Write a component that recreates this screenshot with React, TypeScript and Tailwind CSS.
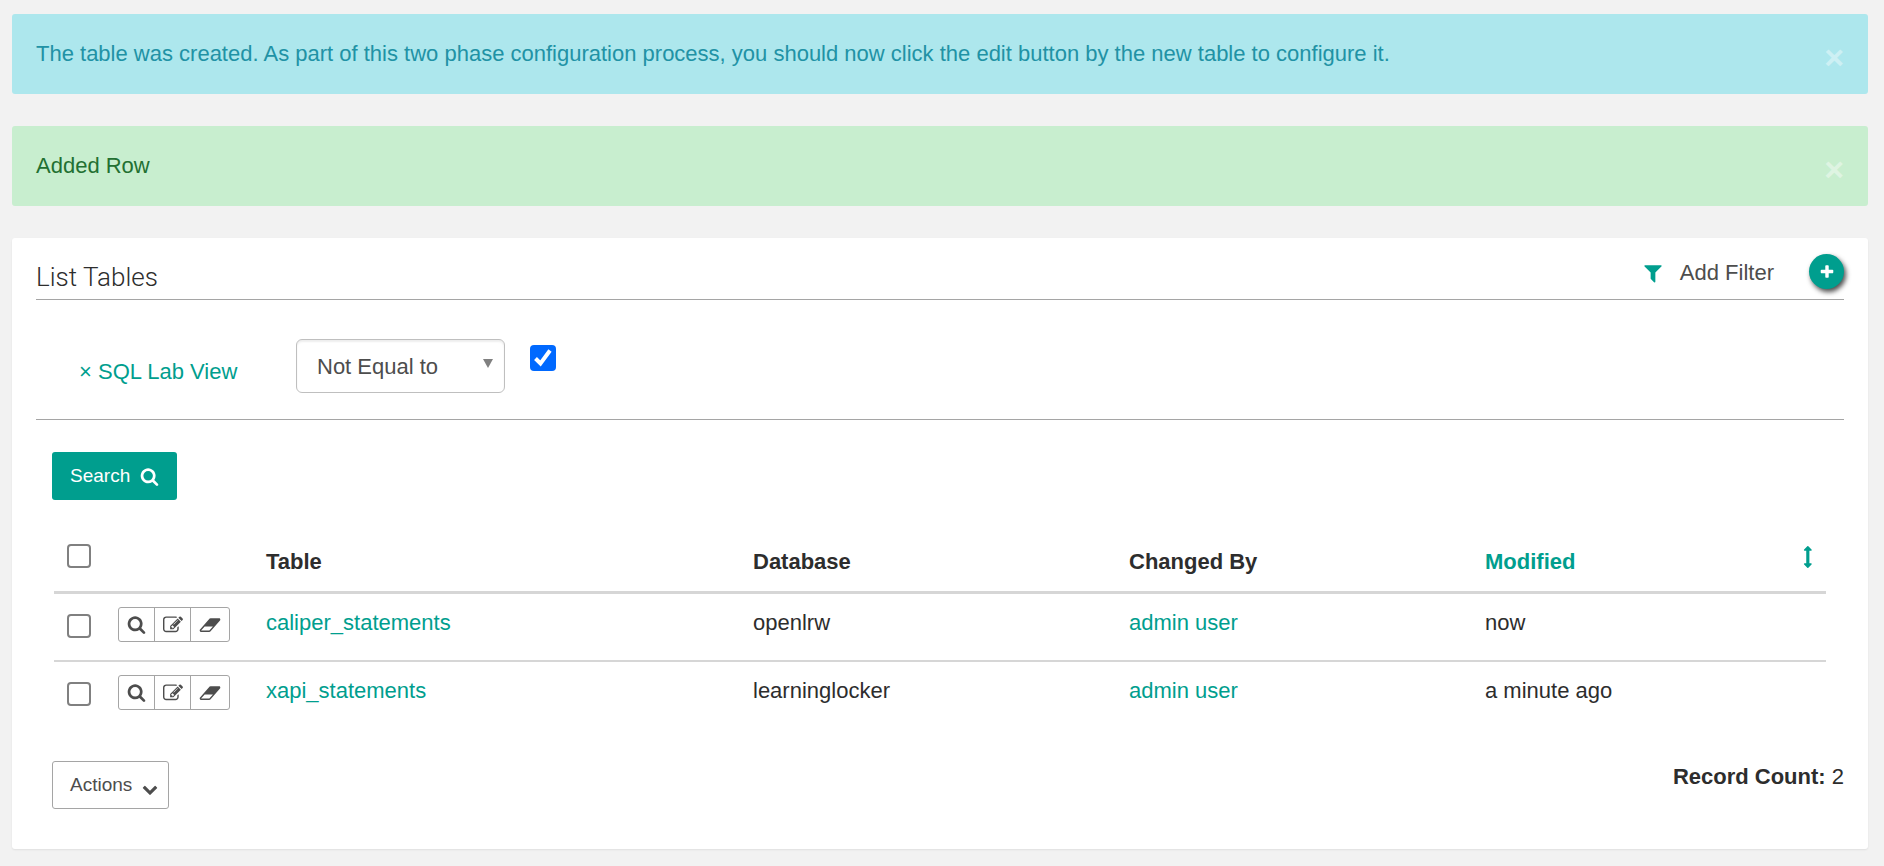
import React from "react";

const ICONS = {
  search: "M1216 832q0-185-131.5-316.5t-316.5-131.5-316.5 131.5-131.5 316.5 131.5 316.5 316.5 131.5 316.5-131.5 131.5-316.5zm512 832q0 52-38 90t-90 38q-54 0-90-38l-343-342q-179 124-399 124-143 0-273.5-55.5t-225-150-150-225-55.5-273.5 55.5-273.5 150-225 225-150 273.5-55.5 273.5 55.5 225 150 150 225 55.5 273.5q0 220-124 399l343 343q37 37 37 90z",
  edit: "M888 1184l116-116-152-152-116 116v56h96v96h56zm440-720q-16-16-33 1l-350 350q-17 17-1 33t33-1l350-350q17-17 1-33zm80 594v190q0 119-84.5 203.5t-203.5 84.5h-832q-119 0-203.5-84.5t-84.5-203.5v-832q0-119 84.5-203.5t203.5-84.5h832q63 0 117 25 15 7 18 23 3 17-9 29l-49 49q-14 14-32 8-23-6-45-6h-832q-66 0-113 47t-47 113v832q0 66 47 113t113 47h832q66 0 113-47t47-113v-126q0-13 9-22l64-64q15-15 35-7t20 29zm-96-738l288 288-672 672h-288v-288zm444 132l-92 92-288-288 92-92q28-28 68-28t68 28l152 152q28 28 28 68t-28 68z",
  eraser: "M960 1408l336-384h-768l-336 384h768zm1013-1077q15 34 9.5 71.5t-30.5 65.5l-896 1024q-38 44-96 44h-768q-38 0-69.5-20.5t-47.5-54.5q-15-34-9.5-71.5t30.5-65.5l896-1024q38-44 96-44h768q38 0 69.5 20.5t47.5 54.5z",
  filter: "M1595 295q17 41-14 70l-493 493v742q0 42-39 59-13 5-25 5-27 0-45-19l-256-256q-19-19-19-45v-486l-493-493q-31-29-14-70 17-39 59-39h1280q42 0 59 39z",
  plus: "M1600 736v192q0 40-28 68t-68 28h-416v416q0 40-28 68t-68 28h-192q-40 0-68-28t-28-68v-416h-416q-40 0-68-28t-28-68v-192q0-40 28-68t68-28h416v-416q0-40 28-68t68-28h192q40 0 68 28t28 68v416h416q40 0 68 28t28 68z",
  arrows: "M1120 320q0 26-19 45t-45 19h-128v1024h128q26 0 45 19t19 45-19 45l-256 256q-19 19-45 19t-45-19l-256-256q-19-19-19-45t19-45 45-19h128v-1024h-128q-26 0-45-19t-19-45 19-45l256-256q19-19 45-19t45 19l256 256q19 19 19 45z",
  chevron: "M1683 808l-742 741q-19 19-45 19t-45-19l-742-741q-19-19-19-45.5t19-45.5l166-165q19-19 45-19t45 19l531 531 531-531q19-19 45-19t45 19l166 165q19 19 19 45.5t-19 45.5z",
};

function Icon({ name, className, viewBox = "0 0 1792 1792" }: { name: keyof typeof ICONS; className: string; viewBox?: string }) {
  return (
    <svg viewBox={viewBox} className={className} fill="currentColor" aria-hidden="true">
      <path d={ICONS[name]} />
    </svg>
  );
}

function Alert({ children, className }: { children: React.ReactNode; className: string }) {
  return (
    <div role="alert" className={`mb-8 flex h-20 items-center justify-between rounded-[3px] px-6 ${className}`}>
      <p>{children}</p>
      <button type="button" aria-label="Close" className="pt-1.5 text-[34px] leading-8 font-bold text-white opacity-40">
        ×
      </button>
    </div>
  );
}

function Check({ label }: { label: string }) {
  return (
    <input
      type="checkbox"
      aria-label={label}
      className="block size-6 appearance-none rounded-[4px] border-2 border-[#808080] bg-white checked:bg-[#0069ff]"
    />
  );
}

const ROWS = [
  { table: "caliper_statements", database: "openlrw", user: "admin user", modified: "now" },
  { table: "xapi_statements", database: "learninglocker", user: "admin user", modified: "a minute ago" },
];

export default function App() {
  return (
    <main className="min-h-screen bg-[#f2f2f2] pt-3.5 pr-4 pb-4 pl-3 font-['Liberation_Sans',Arial,sans-serif] text-[22px] leading-8 text-[#2d2d2d]">
      <Alert className="bg-[#ade7ed] text-[#2192a5]">
        The table was created. As part of this two phase configuration process, you should now click the edit button by the new table to configure it.
      </Alert>
      <Alert className="bg-[#c8eecf] text-[#237032]">Added Row</Alert>

      <section className="rounded-[3px] bg-white px-6 pb-10 shadow-[0_1px_2px_rgba(0,0,0,0.08)]">
        <header className="flex h-[62px] items-center justify-between border-b border-[#a5a5a5]">
          <h1 className="pt-4 font-[Roboto,'Liberation_Sans',sans-serif] text-[26px] leading-8 font-light">List Tables</h1>
          <div className="flex items-center pt-1.5">
            <button type="button" className="flex items-center gap-4 pt-0.5 text-[#4d4d4d]">
              <Icon name="filter" className="size-[22px] text-[#009e8e]" />
              Add Filter
            </button>
            <button
              type="button"
              aria-label="Add"
              className="ml-[35px] flex size-[35px] items-center justify-center rounded-full bg-[#009e8e] text-white shadow-[2px_3px_5px_rgba(0,0,0,0.7)]"
            >
              <Icon name="plus" className="size-4" />
            </button>
          </div>
        </header>

        <div className="flex h-[120px] items-start border-b border-[#a5a5a5] pt-[39px] pl-[43px]">
          <a href="#remove" className="w-[217px] pt-[17px] text-[#009e8e]">× SQL Lab View</a>
          <div className="relative">
            <select
              aria-label="Operator"
              className="block h-[54px] w-[209px] appearance-none rounded-md border border-[#bfbfbf] bg-white pt-0.5 pl-5 text-[#4d4d4d] shadow-[inset_0_2px_2px_rgba(0,0,0,0.07)]"
            >
              <option>Not Equal to</option>
            </select>
            <svg viewBox="0 0 10 9" className="pointer-events-none absolute top-5 right-3 h-[9px] w-[10px]" aria-hidden="true">
              <path d="M0 0h10L5 9z" fill="#808080" />
            </svg>
          </div>
          <label className="relative mt-1.5 ml-[25px] block size-[26px]">
            <input type="checkbox" defaultChecked aria-label="SQL Lab View value" className="block size-[26px] appearance-none rounded-[4px] bg-[#0069ff]" />
            <svg viewBox="0 0 26 26" className="pointer-events-none absolute inset-0 size-[26px]" aria-hidden="true">
              <path d="M5.500 13.500l5 5L20 5.500" fill="none" stroke="white" strokeWidth="4" />
            </svg>
          </label>
        </div>

        <button type="button" className="mt-8 ml-4 flex h-12 items-center gap-2.5 rounded-[3px] bg-[#009e8e] px-[18px] text-[19px] text-white">
          Search
          <Icon name="search" className="size-[19px]" />
        </button>

        <div className="mx-[18px] mt-[30px]">
          <table className="w-full table-fixed border-separate border-spacing-0 text-left">
            <colgroup>
              <col className="w-[64px]" />
              <col className="w-[140px]" />
              <col className="w-[487px]" />
              <col className="w-[376px]" />
              <col className="w-[356px]" />
              <col />
            </colgroup>
            <thead>
              <tr className="h-16 align-top *:border-b-3 *:border-[#d6d6d6]">
                <th className="pt-3.5 pl-[13px]"><Check label="Select all" /></th>
                <th />
                <th className="pt-4 pl-2">Table</th>
                <th className="pt-4 pl-2">Database</th>
                <th className="pt-4 pl-2">Changed By</th>
                <th className="pt-4 pl-2">
                  <a href="#sort" className="flex items-start justify-between pr-1.5 text-[#009e8e]">
                    Modified
                    <Icon name="arrows" className="size-[22px]" />
                  </a>
                </th>
              </tr>
            </thead>
            <tbody>
              {ROWS.map((row) => (
                <tr key={row.table} className="h-[68px] align-top *:border-b-2 *:border-[#d6d6d6] last:*:border-b-0">
                  <td className="pt-5 pl-[13px]"><Check label={`Select ${row.table}`} /></td>
                  <td className="pt-[13px]">
                    <div className="flex h-[35px] w-28 divide-x divide-[#a5a5a5] rounded-[3px] border border-[#a5a5a5] text-[#4d4d4d]">
                      <button type="button" aria-label="Show record" className="flex flex-1 items-center justify-center">
                        <Icon name="search" className="size-[19px]" />
                      </button>
                      <button type="button" aria-label="Edit record" className="flex flex-1 items-center justify-center">
                        <Icon name="edit" className="size-5" />
                      </button>
                      <button type="button" aria-label="Delete record" className="flex w-[38px] items-center justify-center">
                        <Icon name="eraser" viewBox="0 0 2048 1792" className="h-5 w-[22px]" />
                      </button>
                    </div>
                  </td>
                  <td className="pt-[13px] pl-2"><a href="#table" className="text-[#009e8e]">{row.table}</a></td>
                  <td className="pt-[13px] pl-2">{row.database}</td>
                  <td className="pt-[13px] pl-2"><a href="#user" className="text-[#009e8e]">{row.user}</a></td>
                  <td className="pt-[13px] pl-2">{row.modified}</td>
                </tr>
              ))}
            </tbody>
          </table>
        </div>

        <footer className="mt-[31px] flex items-start justify-between">
          <button type="button" className="ml-4 flex h-12 items-center gap-2.5 rounded-[3px] border border-[#a5a5a5] pr-2.5 pl-[17px] text-[19px] text-[#4d4d4d]">
            Actions
            <Icon name="chevron" className="mt-2 size-4" />
          </button>
          <p><strong>Record Count:</strong> 2</p>
        </footer>
      </section>
    </main>
  );
}
